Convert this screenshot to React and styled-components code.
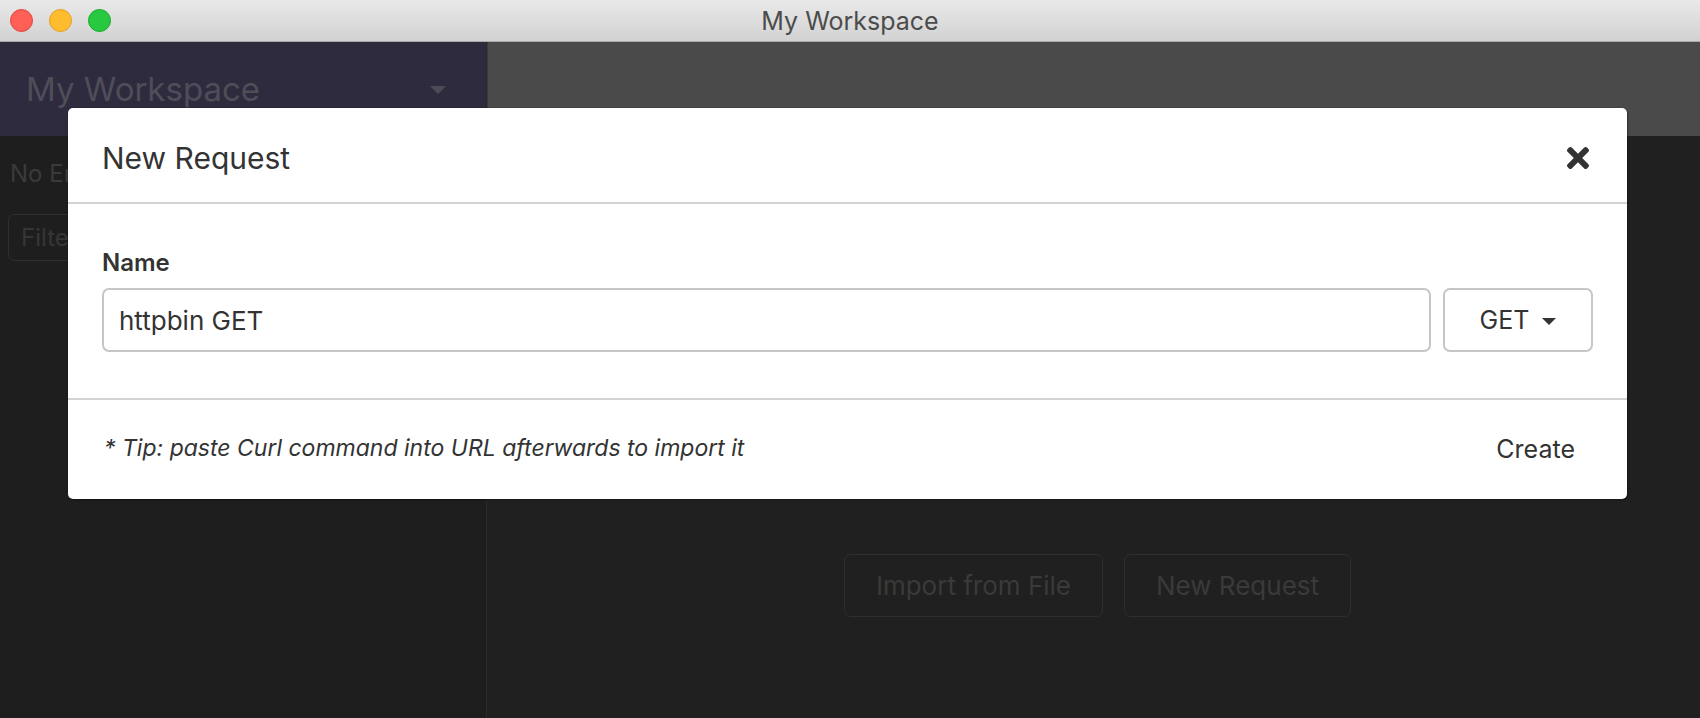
import React from 'react';
import styled, { createGlobalStyle } from 'styled-components';
import { FaTimes } from 'react-icons/fa';

const GlobalStyle = createGlobalStyle`
  html, body {
    margin: 0;
    padding: 0;
    background: #202020;
    font-family: Inter, "Noto Sans", "Liberation Sans", sans-serif;
    -webkit-font-smoothing: antialiased;
  }
  * { box-sizing: border-box; }
`;

const Window = styled.div`
  position: relative;
  width: 1700px;
  height: 718px;
  overflow: hidden;
  display: flex;
  flex-direction: column;
  background: #202020;
`;

const TitleBar = styled.div`
  height: 42px;
  flex-shrink: 0;
  display: flex;
  align-items: center;
  position: relative;
  padding-left: 10px;
  gap: 16px;
  background: linear-gradient(#e9e9e9, #d2d2d2);
  border-bottom: 1px solid #a9a9a9;
`;

const Light = styled.span`
  width: 23px;
  height: 23px;
  border-radius: 50%;
  background: ${p => p.color};
  border: 1px solid ${p => p.edge};
`;

const WindowTitle = styled.div`
  position: absolute;
  left: 0;
  right: 0;
  text-align: center;
  font-size: 25px;
  color: #4c4c4c;
  pointer-events: none;
`;

const Body = styled.div`
  flex: 1;
  display: flex;
  min-height: 0;
`;

const Sidebar = styled.aside`
  width: 487px;
  flex-shrink: 0;
  display: flex;
  flex-direction: column;
  background: #1e1e1e;
  border-right: 1px solid #2a2a2a;
`;

const SidebarHeader = styled.div`
  height: 94px;
  display: flex;
  align-items: center;
  justify-content: space-between;
  padding: 0 40px 0 26px;
  background: #2e2b3e;
  color: #4f4d58;
  font-size: 33px;
`;

const Caret = styled.span`
  width: 0;
  height: 0;
  border-left: ${p => p.size}px solid transparent;
  border-right: ${p => p.size}px solid transparent;
  border-top: ${p => p.size}px solid ${p => p.color};
  margin-top: 2px;
`;

const SidebarBody = styled.div`
  padding: 23px 8px;
  display: flex;
  flex-direction: column;
  gap: 26px;
`;

const Muted = styled.div`
  padding-left: 2px;
  font-size: 24px;
  color: #3a3a3a;
  white-space: nowrap;
`;

const FilterBox = styled.div`
  height: 47px;
  border: 1px solid #2e2e2e;
  border-radius: 6px;
  display: flex;
  align-items: center;
  padding-left: 12px;
  font-size: 24px;
  color: #363636;
`;

const Main = styled.main`
  flex: 1;
  display: flex;
  flex-direction: column;
`;

const MainHeader = styled.div`
  height: 94px;
  background: #4a4a4a;
  border-left: 1px solid #3c3c3c;
`;

const MainBody = styled.div`
  flex: 1;
  display: flex;
  justify-content: center;
  align-items: flex-start;
  gap: 21px;
  padding-top: 418px;
  padding-left: 8px;
  background: #202020;
`;

const GhostButton = styled.div`
  height: 63px;
  display: flex;
  align-items: center;
  padding: 0 31px;
  border: 1px solid #2f2f2f;
  border-radius: 7px;
  font-size: 26px;
  color: #3a3a3a;
`;

const Modal = styled.div`
  position: absolute;
  top: 108px;
  left: 68px;
  width: 1559px;
  background: #fff;
  border-radius: 5px;
  box-shadow: 0 0 0 1px rgba(0, 0, 0, 0.08), 1px 1px 2px rgba(0, 0, 0, 0.3);
  color: #333;
  display: flex;
  flex-direction: column;
`;

const ModalHeader = styled.div`
  height: 96px;
  display: flex;
  align-items: center;
  justify-content: space-between;
  padding: 6px 33px 0 34px;
  border-bottom: 2px solid #d2d2d2;
`;

const ModalTitle = styled.h2`
  margin: 0;
  font-size: 30px;
  font-weight: 400;
  color: #333;
`;

const CloseButton = styled.button`
  border: none;
  background: none;
  padding: 0;
  display: flex;
  color: #333;
`;

const ModalBody = styled.div`
  padding: 44px 34px 46px;
  display: flex;
  flex-direction: column;
  gap: 11px;
`;

const Label = styled.label`
  font-size: 24px;
  font-weight: 600;
  color: #333;
`;

const Row = styled.div`
  display: flex;
  gap: 12px;
`;

const Input = styled.div`
  flex: 1;
  height: 64px;
  border: 2px solid #c6c6c6;
  border-radius: 7px;
  display: flex;
  align-items: center;
  padding-left: 15px;
  font-size: 26px;
  color: #333;
`;

const MethodButton = styled.div`
  width: 150px;
  height: 64px;
  border: 2px solid #c6c6c6;
  border-radius: 7px;
  display: flex;
  align-items: center;
  justify-content: center;
  gap: 13px;
  font-size: 25px;
  color: #333;
`;

const ModalFooter = styled.div`
  height: 101px;
  display: flex;
  align-items: center;
  justify-content: space-between;
  padding: 0 52px 4px 34px;
  border-top: 2px solid #d2d2d2;
`;

const Tip = styled.div`
  font-size: 23px;
  font-style: italic;
  color: #333;
  padding-left: 2px;
`;

const TextButton = styled.div`
  font-size: 25px;
  color: #333;
  margin-top: 3px;
`;

export default function App() {
  return (
    <>
      <GlobalStyle />
      <Window>
        <TitleBar>
          <Light color="#fe5f57" edge="#e0443e" />
          <Light color="#febc2e" edge="#dea123" />
          <Light color="#28c840" edge="#1aab29" />
          <WindowTitle>My Workspace</WindowTitle>
        </TitleBar>
        <Body>
          <Sidebar>
            <SidebarHeader>
              My Workspace
              <Caret size={8} color="#4d4b56" />
            </SidebarHeader>
            <SidebarBody>
              <Muted>No Environment</Muted>
              <FilterBox>Filter</FilterBox>
            </SidebarBody>
          </Sidebar>
          <Main>
            <MainHeader />
            <MainBody>
              <GhostButton>Import from File</GhostButton>
              <GhostButton>New Request</GhostButton>
            </MainBody>
          </Main>
        </Body>

        <Modal>
          <ModalHeader>
            <ModalTitle>New Request</ModalTitle>
            <CloseButton aria-label="Close">
              <FaTimes size={32} />
            </CloseButton>
          </ModalHeader>
          <ModalBody>
            <Label>Name</Label>
            <Row>
              <Input>httpbin GET</Input>
              <MethodButton>
                GET
                <Caret size={7} color="#333" />
              </MethodButton>
            </Row>
          </ModalBody>
          <ModalFooter>
            <Tip>* Tip: paste Curl command into URL afterwards to import it</Tip>
            <TextButton>Create</TextButton>
          </ModalFooter>
        </Modal>
      </Window>
    </>
  );
}
